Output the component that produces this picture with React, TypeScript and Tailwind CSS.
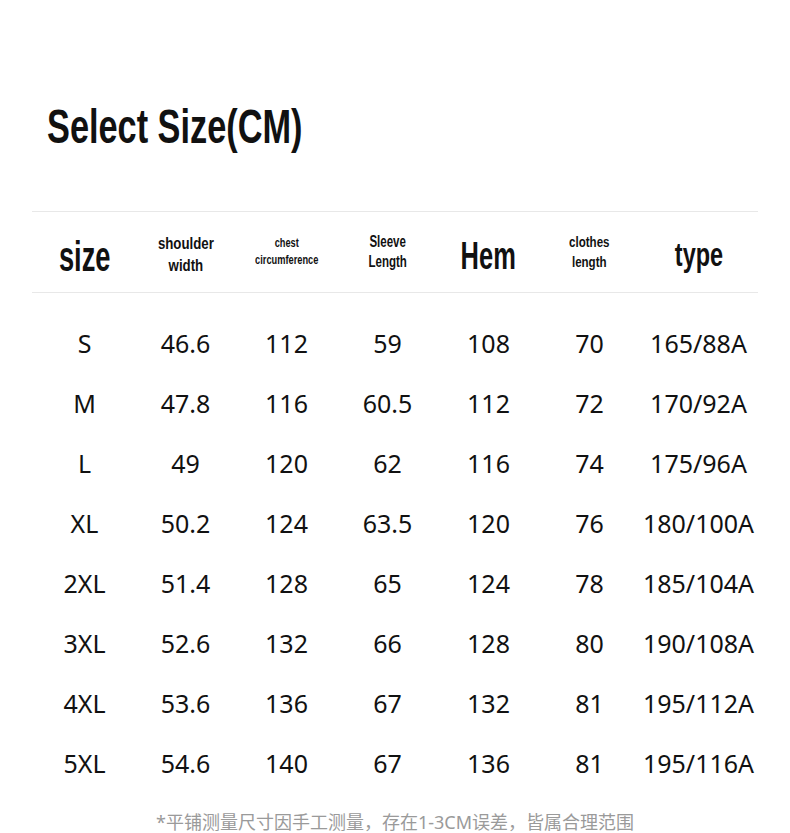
const rows = [
  ["S", "46.6", "112", "59", "108", "70", "165/88A"],
  ["M", "47.8", "116", "60.5", "112", "72", "170/92A"],
  ["L", "49", "120", "62", "116", "74", "175/96A"],
  ["XL", "50.2", "124", "63.5", "120", "76", "180/100A"],
  ["2XL", "51.4", "128", "65", "124", "78", "185/104A"],
  ["3XL", "52.6", "132", "66", "128", "80", "190/108A"],
  ["4XL", "53.6", "136", "67", "132", "81", "195/112A"],
  ["5XL", "54.6", "140", "67", "136", "81", "195/116A"],
];

const cols = "grid grid-cols-[101px_101px_101px_101px_101px_101px_117px]";
const narrow = "font-['Liberation_Sans',Arial,sans-serif] font-bold";

export default function App() {
  return (
    <div className="w-[790px] h-[833px] bg-white text-[#111] overflow-hidden">
      <div className="pt-[96px] pl-[47px]">
        <h1
          className={`${narrow} inline-block origin-left scale-x-[0.7] text-[49px] leading-[60px] whitespace-nowrap`}
        >
          Select Size(CM)
        </h1>
      </div>

      <div className="mt-[55px] mx-[32px] w-[726px] border-t border-b border-[#e8e8e8]">
        <div className={`${cols} ml-[2px] h-[80px] items-center text-center ${narrow}`}>
          <div className="pt-[10px]">
            <span className="inline-block scale-x-[0.65] text-[42px] leading-none">size</span>
          </div>
          <div className="pt-[6px]">
            <span className="inline-block scale-x-[0.78] text-[17px] leading-[22px]">
              shoulder
              <br />
              width
            </span>
          </div>
          <div className="pt-[2px]">
            <span className="inline-block scale-x-[0.74] text-[12.5px] leading-[17px]">
              chest
              <br />
              circumference
            </span>
          </div>
          <div className="pt-[2px]">
            <span className="inline-block scale-x-[0.72] text-[16px] leading-[20px]">
              Sleeve
              <br />
              Length
            </span>
          </div>
          <div className="pt-[8px]">
            <span className="inline-block scale-x-[0.67] text-[38px] leading-none">Hem</span>
          </div>
          <div className="pt-[2px]">
            <span className="inline-block scale-x-[0.77] text-[15px] leading-[20px]">
              clothes
              <br />
              length
            </span>
          </div>
          <div className="pt-[6px]">
            <span className="inline-block scale-x-[0.69] text-[34px] leading-none">type</span>
          </div>
        </div>
      </div>

      <div className="mt-[21px] ml-[34px] font-['Noto_Sans',sans-serif] text-[25px] text-[#111]">
        {rows.map((r) => (
          <div key={r[0]} className={`${cols} h-[60px] items-center text-center`}>
            {r.map((c, i) => (
              <div key={i}>{c}</div>
            ))}
          </div>
        ))}
      </div>

      <div className="mt-[18px] text-center font-['Noto_Sans','Noto_Sans_CJK_SC',sans-serif] text-[18px] text-[#9a9a9a] leading-[20px]">
        *平铺测量尺寸因手工测量，存在1-3CM误差，皆属合理范围
      </div>
    </div>
  );
}
